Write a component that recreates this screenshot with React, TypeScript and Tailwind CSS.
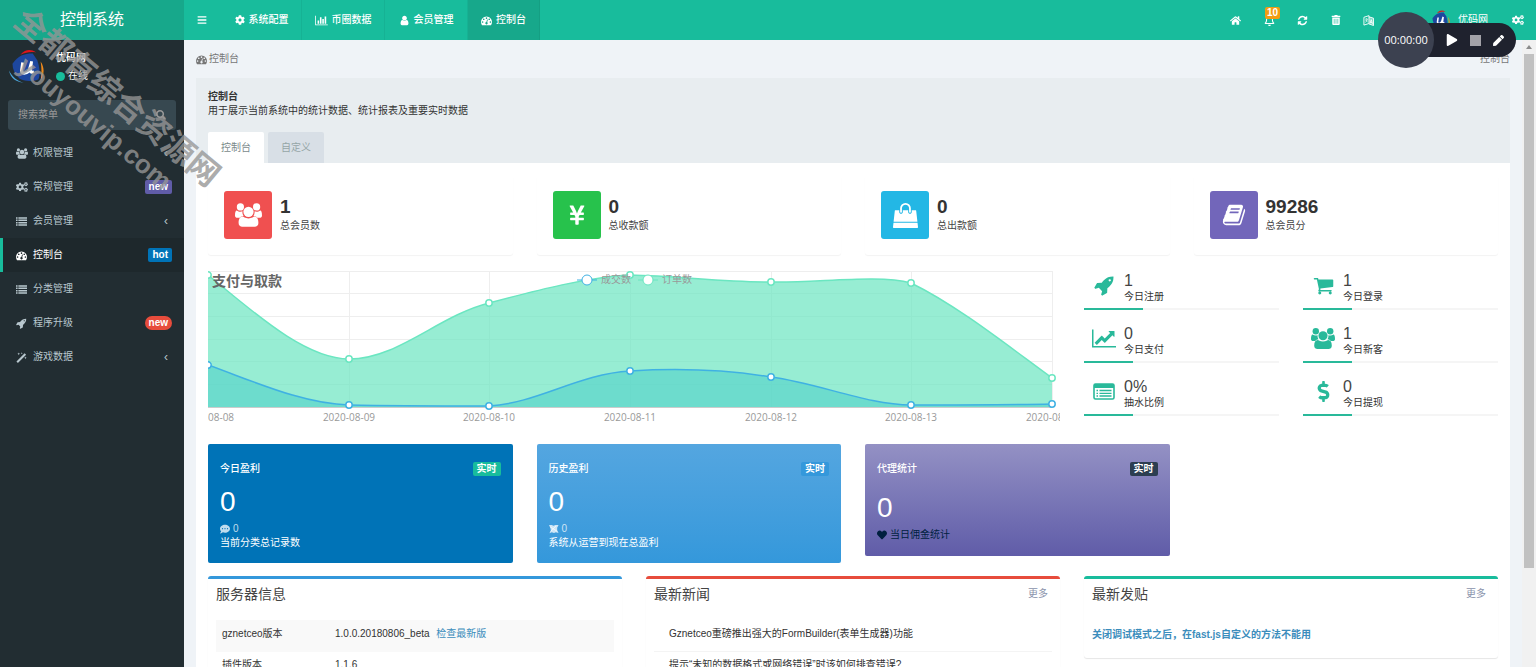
import type { ReactNode } from "react";
import {
  FaBars,
  FaCog,
  FaCogs,
  FaCommentDots,
  FaDollarSign,
  FaExpand,
  FaHeart,
  FaHome,
  FaPen,
  FaPlay,
  FaRegBell,
  FaSearch,
  FaTrashAlt,
  FaYenSign,
} from "react-icons/fa";

const paths = {
  bag: "M1757 1408l35 313q3 28-16 50-19 21-48 21h-1664q-29 0-48-21-19-22-16-50l35-313h1722zm-93-839l86 775h-1708l86-775q3-24 21-40.5t43-16.5h256v128q0 53 37.5 90.5t90.5 37.5 90.5-37.5 37.5-90.5v-128h384v128q0 53 37.5 90.5t90.5 37.5 90.5-37.5 37.5-90.5v-128h256q25 0 43 16.5t21 40.5zm-384-185v256q0 26-19 45t-45 19-45-19-19-45v-256q0-106-75-181t-181-75-181 75-75 181v256q0 26-19 45t-45 19-45-19-19-45v-256q0-159 112.5-271.5t271.5-112.5 271.5 112.5 112.5 271.5z",
  book: "M1703 478q40 57 18 129l-275 906q-19 64-76.5 107.5t-122.5 43.5h-923q-77 0-148.5-53.5t-99.5-131.5q-24-67-2-127 0-4 3-27t4-37q1-8-3-21.5t-3-19.5q2-11 8-21t16.5-23.5 16.5-23.5q23-38 45-91.5t30-91.5q3-10 .5-30t-.5-28q3-11 17-28t17-23q21-36 42-92t25-90q1-9-2.5-32t.5-28q4-13 22-30.5t22-22.5q19-26 42.5-84.5t27.5-96.5q1-8-3-25.5t-2-26.5q2-8 9-18t18-23 17-21q8-12 16.5-30.5t15-35 16-36 19.5-32 26.5-23.5 36-11.5 47.5 5.5l-1 3q38-9 51-9h761q74 0 114 56t18 130l-274 906q-36 119-71.5 153.5t-128.5 34.5h-869q-27 0-38 15-11 16-1 43 24 70 144 70h923q29 0 56-15.5t35-41.5l300-987q7-22 5-57 38 15 59 43zm-1064 2q-4 13 2 22.5t20 9.5h608q13 0 25.5-9.5t16.5-22.5l21-64q4-13-2-22.5t-20-9.5h-608q-13 0-25.5 9.5t-16.5 22.5zm-83 256q-4 13 2 22.5t20 9.5h608q13 0 25.5-9.5t16.5-22.5l21-64q4-13-2-22.5t-20-9.5h-608q-13 0-25.5 9.5t-16.5 22.5z",
  dashboard:
    "M384 1152q0-53-37.5-90.5t-90.5-37.5-90.5 37.5-37.5 90.5 37.5 90.5 90.5 37.5 90.5-37.5 37.5-90.5zm192-448q0-53-37.5-90.5t-90.5-37.5-90.5 37.5-37.5 90.5 37.5 90.5 90.5 37.5 90.5-37.5 37.5-90.5zm428 481l101-382q6-26-7.5-48.5t-38.5-29.5-48 6.5-30 39.5l-101 382q-60 5-107 43.5t-63 98.5q-20 77 20 146t117 89 146-20 89-117q16-60-6-117t-72-91zm660-33q0-53-37.5-90.5t-90.5-37.5-90.5 37.5-37.5 90.5 37.5 90.5 90.5 37.5 90.5-37.5 37.5-90.5zm-640-640q0-53-37.5-90.5t-90.5-37.5-90.5 37.5-37.5 90.5 37.5 90.5 90.5 37.5 90.5-37.5 37.5-90.5zm448 192q0-53-37.5-90.5t-90.5-37.5-90.5 37.5-37.5 90.5 37.5 90.5 90.5 37.5 90.5-37.5 37.5-90.5zm320 448q0 261-141 483-19 29-54 29h-1402q-35 0-54-29-141-221-141-483 0-182 71-348t191-286 286-191 348-71 348 71 286 191 191 286 71 348z",
  rocket:
    "M1440 448q0-40-28-68t-68-28-68 28-28 68 28 68 68 28 68-28 28-68zm224-288q0 249-75.5 430.5t-253.5 360.5q-81 80-195 176l-20 379q-2 16-16 26l-384 224q-7 4-16 4-12 0-23-9l-64-64q-13-14-8-32l85-276-281-281-276 85q-3 1-9 1-14 0-23-9l-64-64q-17-19-5-39l224-384q10-14 26-16l379-20q96-114 176-195 188-187 358-258t431-71q14 0 24 9.5t10 22.5z",
  cart: "M704 1536q0 52-38 90t-90 38-90-38-38-90 38-90 90-38 90 38 38 90zm896 0q0 52-38 90t-90 38-90-38-38-90 38-90 90-38 90 38 38 90zm128-1088v512q0 24-16.5 42.5t-40.5 21.5l-1044 122q13 60 13 70 0 16-24 64h920q26 0 45 19t19 45-19 45-45 19h-1024q-26 0-45-19t-19-45q0-11 8-31.5t16-36 21.5-40 15.5-29.5l-177-823h-204q-26 0-45-19t-19-45 19-45 45-19h256q16 0 28.5 6.5t19.5 15.5 13 24.5 8 26 5.5 29.5 4.5 26h1201q26 0 45 19t19 45z",
  lineChart:
    "M2048 1536v128h-2048v-1536h128v1408h1920zm-128-1248v435q0 21-19.5 29.5t-35.5-7.5l-121-121-633 633q-10 10-23 10t-23-10l-233-233-416 416-192-192 585-585q10-10 23-10t23 10l233 233 464-464-121-121q-16-16-7.5-35.5t29.5-19.5h435q14 0 23 9t9 23z",
  barChart:
    "M640 896v512h-256v-512h256zm384-512v1024h-256v-1024h256zm1024 1152v128h-2048v-1536h128v1408h1920zm-640-896v768h-256v-768h256zm384-384v1152h-256v-1152h256z",
  user: "M1536 1399q0 109-62.5 187t-150.5 78h-854q-88 0-150.5-78t-62.5-187q0-85 8.5-160.5t31.5-152 58.5-131 94-89 134.5-34.5q131 128 313 128t313-128q76 0 134.5 34.5t94 89 58.5 131 31.5 152 8.5 160.5zm-256-887q0 159-112.5 271.5t-271.5 112.5-271.5-112.5-112.5-271.5 112.5-271.5 271.5-112.5 271.5 112.5 112.5 271.5z",
  list: "M0 192h256v256H0zM384 192h1408v256H384zM0 576h256v256H0zM384 576h1408v256H384zM0 960h256v256H0zM384 960h1408v256H384zM0 1344h256v256H0zM384 1344h1408v256H384z",
  refresh:
    "M1639 1056q0 5-1 7-64 268-268 434.5t-478 166.5q-146 0-282.5-55t-243.5-157l-129 129q-19 19-45 19t-45-19-19-45v-448q0-26 19-45t45-19h448q26 0 45 19t19 45-19 45l-137 137q71 66 161 102t187 36q134 0 250-65t186-179q11-17 53-117 8-23 30-23h192q13 0 22.5 9.5t9.5 22.5zm25-800v448q0 26-19 45t-45 19h-448q-26 0-45-19t-19-45 19-45l138-138q-148-137-349-137-134 0-250 65t-186 179q-11 17-53 117-8 23-30 23h-199q-13 0-22.5-9.5t-9.5-22.5v-7q65-268 270-434.5t480-166.5q146 0 284 55.5t245 156.5l130-129q19-19 45-19t45 19 19 45z",
};

function Glyph({
  name,
  className,
  box = "0 0 1792 1792",
}: {
  name: keyof typeof paths;
  className: string;
  box?: string;
}) {
  return (
    <svg viewBox={box} className={`shrink-0 ${className}`} fill="currentColor" aria-hidden="true">
      <path d={paths[name]} />
    </svg>
  );
}

function Group({ className }: { className: string }) {
  const side = "M0 13.500C0 10 .8 8 2 8C4 9.600 6.500 9.600 8.300 8.900C8 11 8.500 12.500 9.500 14C7.500 14.100 6.300 14.800 5.400 16H3C1 16 0 15.300 0 13.500z";
  return (
    <svg viewBox="0 0 30 26" className={`shrink-0 ${className}`} fill="currentColor" aria-hidden="true">
      <circle cx="6" cy="4" r="4" />
      <circle cx="24" cy="4" r="4" />
      <circle cx="15" cy="9.500" r="5.700" />
      <path d={side} />
      <path d={side} transform="matrix(-1 0 0 1 30 0)" />
      <path d="M4 22C4 17.500 5.500 14.800 8.500 14.800C9.500 14.800 11 16.800 15 16.800S20.500 14.800 21.500 14.800C24.500 14.800 26 17.500 26 22C26 25 24 26 22 26H8C6 26 4 25 4 22z" />
    </svg>
  );
}

function Magic({ className }: { className: string }) {
  return (
    <svg viewBox="0 0 12 12" className={`shrink-0 ${className}`} fill="currentColor" aria-hidden="true">
      <path d="M.5 10.300L9.400 1.400 11 3 2.100 11.900zM3 .5l.4 1.100L4.500 2l-1.100.4L3 3.500l-.4-1.100L1.500 2l1.100-.4zM6.300.300l.3.800.8.3-.8.300-.300.800-.3-.8-.8-.3.800-.300zM10.300 5l.4 1 1 .4-1 .4-.4 1-.4-1-1-.4 1-.4z" />
    </svg>
  );
}

function ListAlt({ className }: { className: string }) {
  return (
    <svg viewBox="0 0 22 17" className={`shrink-0 ${className}`} aria-hidden="true">
      <rect x="1" y="1" width="20" height="15" rx="1.5" fill="none" stroke="currentColor" strokeWidth="1.600" />
      <path d="M1 1h20v4H1z" fill="currentColor" />
      <path
        d="M3.500 7.500H5M3.500 10.300H5M3.500 13H5M6.500 7.500h12M6.500 10.300h12M6.500 13h12"
        stroke="currentColor"
        strokeWidth="1.300"
      />
    </svg>
  );
}

function Language({ className }: { className: string }) {
  return (
    <svg viewBox="0 0 12 12" className={`shrink-0 ${className}`} fill="none" stroke="currentColor" aria-hidden="true">
      <path d="M1 2.500l5.500-1.800v8.600L1 11z" />
      <path d="M6.500 2l5 1.500v8l-5-1.800" fill="currentColor" fillOpacity="0.45" />
      <path d="M2.400 4.500h2.800M3.800 3.600v1M2.500 8c1.200-.6 2-1.800 2.200-3.300M3 5.500c.4 1 1.200 1.800 2 2" strokeWidth="0.8" />
      <path d="M7.800 9l1.200-4 1.300 4.700M8.100 7.800l1.800.5" strokeWidth="0.900" />
    </svg>
  );
}

function Flag({ className }: { className: string }) {
  return (
    <svg viewBox="0 0 11 11" className={`shrink-0 ${className}`} fill="currentColor" aria-hidden="true">
      <path d="M0 1h3l2 1 2-1h3.500L9 4v3l1.500 3-3-1-2 .8L3 9 .5 10.200 2 7 1.500 4z" />
      <path d="M1 3l8 5M2 8l6-6" stroke="currentColor" />
    </svg>
  );
}

function Logo({ className }: { className: string }) {
  return (
    <svg viewBox="0 0 32 32" className={`shrink-0 ${className}`} aria-hidden="true">
      <path d="M4 13C9 6 14 4 22 4l4 6c2 6 3 12 1 17-6 2-13 2-17-1-4-4-6-8-6-13z" fill="#1d479f" />
      <path d="M11 5C16 0 20 0 25 3c-5-1-9 0-14 2z" fill="#e0141b" />
      <path d="M29 11c4 6 3 12 0 17 1-6 1-11 0-17z" fill="#f08a1c" />
      <path d="M1 19c1 7 6 10 13 11C8 28 4 25 1 19z" fill="#4ba6dc" />
      <path d="M13 12l-1 7c0 4 6 3 7-1l2-7-1 8c0 2 1 2 3 1" fill="none" stroke="#fff" strokeWidth="2.500" />
    </svg>
  );
}

const menu = [
  { text: "权限管理", icon: <Group className="w-3 h-[11px]" />, arrow: true },
  { text: "常规管理", icon: <FaCogs className="size-3" />, badge: "new", badgeStyle: "rounded-xs bg-[#605ca8]" },
  { text: "会员管理", icon: <Glyph name="list" className="size-[11px]" />, arrow: true },
  {
    text: "控制台",
    icon: <Glyph name="dashboard" className="size-[11px]" />,
    badge: "hot",
    badgeStyle: "rounded-xs bg-[#0073b7]",
    active: true,
  },
  { text: "分类管理", icon: <Glyph name="list" className="size-[11px]" /> },
  { text: "程序升级", icon: <Glyph name="rocket" className="size-[11px]" />, badge: "new", badgeStyle: "rounded-full bg-[#e74c3c]" },
  { text: "游戏数据", icon: <Magic className="size-[11px]" />, arrow: true },
];

const navTabs = [
  { text: "系统配置", icon: <FaCog className="size-[10px]" />, style: "w-20" },
  { text: "币圈数据", icon: <Glyph name="barChart" box="0 0 2048 1792" className="w-[13px] h-[11px]" />, style: "w-[83px]" },
  { text: "会员管理", icon: <Glyph name="user" className="size-[11px]" />, style: "w-[83px]" },
  { text: "控制台", icon: <Glyph name="dashboard" className="size-[11px]" />, style: "w-[72px] bg-[#17a88b]" },
];

const totals = [
  { value: "1", label: "总会员数", bg: "bg-[#f05050]", icon: <Group className="w-[27px] h-6" /> },
  { value: "0", label: "总收款额", bg: "bg-[#27c24c]", icon: <FaYenSign className="size-[22px]" /> },
  { value: "0", label: "总出款额", bg: "bg-[#23b7e5]", icon: <Glyph name="bag" className="size-[25px]" /> },
  { value: "99286", label: "总会员分", bg: "bg-[#7266ba]", icon: <Glyph name="book" className="size-6" /> },
];

const today = [
  { value: "1", label: "今日注册", bar: "w-[30%]", icon: <Glyph name="rocket" className="size-[21px]" /> },
  { value: "1", label: "今日登录", bar: "w-1/4", icon: <Glyph name="cart" className="size-[21px]" /> },
  { value: "0", label: "今日支付", bar: "w-1/4", icon: <Glyph name="lineChart" box="0 0 2048 1792" className="w-6 h-[21px]" /> },
  { value: "1", label: "今日新客", bar: "w-1/4", icon: <Group className="w-6 h-[21px]" /> },
  { value: "0%", label: "抽水比例", bar: "w-1/4", icon: <ListAlt className="w-[22px] h-[17px]" /> },
  { value: "0", label: "今日提现", bar: "w-1/4", icon: <FaDollarSign className="size-[21px]" /> },
];

const greenLine =
  "M0 4C40 36 95 88 141 88C190 88 230 45 281 32C330 19 380 6 422 4C470 5 515 11 563 11C610 12 670 3 703 12C750 35 800 75 844 107";
const blueLine =
  "M0 94C45 110 95 133 141 134C185 135 240 135 281 135C330 132 370 103 422 100C470 97 520 99 563 106C610 112 660 134 703 134C750 134 800 134 844 133";
const xs = [0, 141, 281, 422, 563, 703, 844];
const greenYs = [4, 88, 32, 4, 11, 12, 107];
const blueYs = [94, 134, 135, 100, 106, 134, 133];

function Chart() {
  return (
    <svg viewBox="0 0 852 157" className="w-full" role="img" aria-label="支付与取款">
      <g stroke="#eee">
        {[0.5, 22.5, 45.5, 68.5, 90.5, 113.5].map((y) => (
          <path key={y} d={`M0 ${y}H844`} />
        ))}
        {xs.slice(1).map((x) => (
          <path key={x} d={`M${x}.5 0V136`} />
        ))}
      </g>
      <path d="M0 136.500H844" stroke="#ccc" />
      <path d={`${greenLine}V136H0z`} fill="#6be6c1" fillOpacity="0.7" />
      <path d={greenLine} fill="none" stroke="#6be6c1" strokeWidth="1.5" />
      <path d={`${blueLine}V136H0z`} fill="#44ccc7" fillOpacity="0.5" />
      <path d={blueLine} fill="none" stroke="#3fb1e3" strokeWidth="1.500" />
      {xs.map((x, i) => (
        <g key={x} fill="#fff" strokeWidth="1.500">
          <circle cx={x} cy={greenYs[i]} r="3.200" stroke="#6be6c1" />
          <circle cx={x} cy={blueYs[i]} r="3.200" stroke="#3fb1e3" />
        </g>
      ))}
      <text x="4" y="15" fontSize="14" fontWeight="700" fill="#666">
        支付与取款
      </text>
      <g fontSize="10" fill="#999">
        <path d="M369 9h20" stroke="#3fb1e3" />
        <circle cx="379" cy="9" r="5" fill="#fff" stroke="#3fb1e3" />
        <text x="393" y="12">成交数</text>
        <path d="M430 9h20" stroke="#6be6c1" />
        <circle cx="440" cy="9" r="5" fill="#fff" stroke="#6be6c1" />
        <text x="454" y="12">订单数</text>
      </g>
      <g fontSize="10" fill="#999" textAnchor="middle" className="font-['Open_Sans','Noto_Sans',sans-serif]">
        {xs.map((x, i) => (
          <text key={x} x={x} y="150">
            {`2020-08-${String(i + 8).padStart(2, "0")}`}
          </text>
        ))}
      </g>
    </svg>
  );
}

function ProfitCard({
  title,
  bg,
  tag,
  children,
}: {
  title: string;
  bg: string;
  tag: string;
  children: ReactNode;
}) {
  return (
    <div className={`rounded-xs px-3 text-white ${bg}`}>
      <div className="flex items-center justify-between pt-[18px]">
        <h5 className="font-medium">{title}</h5>
        <span className={`rounded-xs px-1 font-bold leading-[14px] ${tag}`}>实时</span>
      </div>
      {children}
    </div>
  );
}

function Box({ title, border, more, children }: { title: string; border: string; more?: boolean; children: ReactNode }) {
  return (
    <section className={`rounded-[3px] border-t-[3px] bg-white px-2 shadow-[0_1px_1px_rgba(0,0,0,0.1)] ${border}`}>
      <div className="flex h-[41px] items-start justify-between pt-[3px]">
        <h3 className="text-[14px] leading-6 text-[#444]">{title}</h3>
        {more && (
          <a href="#more" className="pr-1 leading-6 text-[#8a93ab]">
            更多
          </a>
        )}
      </div>
      {children}
    </section>
  );
}

export default function App() {
  return (
    <div className="relative flex h-screen overflow-hidden bg-[#eff3f7] font-['Liberation_Sans','Noto_Sans_CJK_SC',sans-serif] text-[10px] leading-[14px] text-[#333]">
      <aside className="w-[184px] shrink-0 bg-[#222d32] text-[#b8c7ce]">
        <a href="#home" className="flex h-10 items-center justify-center bg-[#17a88b] text-[16px] text-white">
          控制系统
        </a>
        <div className="flex items-center gap-3 pt-[9px] pl-2">
          <Logo className="size-9" />
          <div className="text-white">
            <p className="font-bold leading-[18px]">优码网</p>
            <p className="flex items-center gap-[3px] leading-[18px]">
              <span className="size-[9px] rounded-full bg-[#18bc9c]" />
              在线
            </p>
          </div>
        </div>
        <form className="mx-2 mt-[15px] flex h-[30px] items-center rounded-[3px] bg-[#374850] px-2.5">
          <input aria-label="搜索菜单" placeholder="搜索菜单" className="min-w-0 flex-1 bg-transparent outline-none placeholder:text-[#999]" />
          <button type="button" aria-label="搜索">
            <FaSearch className="size-[10px] text-[#999]" />
          </button>
        </form>
        <nav className="mt-1.5">
          {menu.map((item) => (
            <a
              key={item.text}
              href="#menu"
              className={`flex h-[34px] items-center border-l-[3px] pr-3 pl-[13px] ${
                item.active ? "border-[#18bc9c] bg-[#1e282c] text-white" : "border-transparent"
              }`}
            >
              <span className="flex w-[17px] items-center">{item.icon}</span>
              <span className="flex-1">{item.text}</span>
              {item.badge && (
                <span className={`px-1 font-bold leading-[14px] text-white ${item.badgeStyle}`}>{item.badge}</span>
              )}
              {item.arrow && <span className="pr-1 text-[12px]">‹</span>}
            </a>
          ))}
        </nav>
      </aside>

      <div className="flex min-w-0 flex-1 flex-col">
        <header className="flex h-10 shrink-0 items-center bg-[#18bc9c] text-white">
          <button type="button" aria-label="菜单" className="flex w-9 justify-center">
            <FaBars className="size-[10px]" />
          </button>
          {navTabs.map((tab) => (
            <a
              key={tab.text}
              href="#tab"
              className={`ml-0 flex h-full items-center justify-center gap-1 border-r border-black/5 font-medium first-of-type:ml-0.5 ${tab.style}`}
            >
              {tab.icon}
              {tab.text}
            </a>
          ))}
          <div className="ml-auto flex items-center">
            <a href="#home" aria-label="首页" className="flex w-[34px] justify-center">
              <FaHome className="size-[11px]" />
            </a>
            <a href="#notice" aria-label="通知" className="relative flex w-[34px] justify-center">
              <FaRegBell className="size-[11px]" />
              <span className="absolute -top-2 left-[13px] rounded-xs bg-[#f39c12] px-0.5 font-bold leading-3">10</span>
            </a>
            <button type="button" aria-label="刷新" className="flex w-[33px] justify-center">
              <Glyph name="refresh" className="size-[11px]" />
            </button>
            <button type="button" aria-label="清空缓存" className="flex w-[33px] justify-center">
              <FaTrashAlt className="size-[10px]" />
            </button>
            <button type="button" aria-label="语言" className="flex w-[33px] justify-center">
              <Language className="size-[11px]" />
            </button>
            <button type="button" aria-label="全屏" className="flex w-[33px] justify-center">
              <FaExpand className="size-[10px]" />
            </button>
            <a href="#user" className="flex items-center gap-2 px-3">
              <Logo className="size-5" />
              优码网
            </a>
            <button type="button" aria-label="设置" className="flex w-9 justify-center">
              <FaCogs className="size-3" />
            </button>
          </div>
        </header>

        <div className="flex min-h-0 flex-1">
          <main className="min-w-0 flex-1 overflow-hidden px-3">
            <div className="flex h-[38px] items-center justify-between text-[#777]">
              <span className="flex items-center gap-0.5">
                <Glyph name="dashboard" className="size-[11px]" />
                控制台
              </span>
              <span>控制台</span>
            </div>

            <div className="bg-white">
              <div className="bg-[#e8edf0] px-3 pt-3">
                <h1 className="font-bold">控制台</h1>
                <p>用于展示当前系统中的统计数据、统计报表及重要实时数据</p>
                <div className="mt-[14px] flex gap-1">
                  <button type="button" className="h-[31px] w-14 rounded-t-xs bg-white text-[#7b8a8b]">
                    控制台
                  </button>
                  <button type="button" className="h-[31px] w-14 rounded-t-xs bg-[#d8dfe6] text-[#95a5a6]">
                    自定义
                  </button>
                </div>
              </div>

              <div className="px-3 pt-3">
                <div className="grid grid-cols-4 gap-6">
                  {totals.map((item) => (
                    <div key={item.label} className="flex gap-2 rounded-[3px] p-4 shadow-[0_1px_1px_rgba(0,0,0,0.05)]">
                      <span className={`flex size-12 items-center justify-center rounded-[3px] text-white ${item.bg}`}>
                        {item.icon}
                      </span>
                      <div className="pt-[5px]">
                        <p className="text-[19px] font-bold leading-[22px]">{item.value}</p>
                        <p className="leading-4 text-[#444]">{item.label}</p>
                      </div>
                    </div>
                  ))}
                </div>

                <div className="mt-4 grid grid-cols-3 gap-6">
                  <div className="col-span-2">
                    <Chart />
                  </div>
                  <div className="grid grid-cols-2 content-start gap-x-6 gap-y-[14px]">
                    {today.map((item) => (
                      <div key={item.label}>
                        <div className="flex h-[37px] items-start pl-2">
                          <span className="flex h-7 w-6 items-center justify-center text-[#29b99a]">{item.icon}</span>
                          <div className="pl-2">
                            <p className="text-[16px] leading-[19px] text-[#444]">{item.value}</p>
                            <p>{item.label}</p>
                          </div>
                        </div>
                        <div className="h-0.5 bg-[#f5f5f5]">
                          <div className={`h-full bg-[#29b99a] ${item.bar}`} />
                        </div>
                      </div>
                    ))}
                  </div>
                </div>

                <div className="mt-4 grid grid-cols-4 items-start gap-6">
                  <ProfitCard title="今日盈利" bg="h-[119px] bg-[#0073b7]" tag="bg-[#18bc9c]">
                    <p className="mt-2 text-[28px] leading-9">0</p>
                    <p className="mt-0.5 flex items-center gap-[3px] text-white/75">
                      <FaCommentDots className="size-[10px]" />0
                    </p>
                    <p>当前分类总记录数</p>
                  </ProfitCard>
                  <ProfitCard title="历史盈利" bg="h-[119px] bg-linear-to-b from-[#54a6e0] to-[#3498db]" tag="bg-[#3498db]">
                    <p className="mt-2 text-[28px] leading-9">0</p>
                    <p className="mt-0.5 flex items-center gap-[3px] text-white/75">
                      <Flag className="size-[10px]" />0
                    </p>
                    <p>系统从运营到现在总盈利</p>
                  </ProfitCard>
                  <ProfitCard title="代理统计" bg="h-28 bg-linear-to-b from-[#9491c4] to-[#605ca8]" tag="bg-[#2c3e50]">
                    <p className="mt-[14px] text-[28px] leading-9">0</p>
                    <p className="mt-0.5 flex items-center gap-[3px] text-[#001f3f]">
                      <FaHeart className="size-[10px]" />
                      当日佣金统计
                    </p>
                  </ProfitCard>
                </div>

                <div className="mt-[13px] grid grid-cols-3 items-start gap-6">
                  <Box title="服务器信息" border="border-[#3498db]">
                    <table className="w-full">
                      <tbody>
                        <tr className="h-8 bg-[#f9f9f9]">
                          <td className="w-[113px] px-1.5 pb-1">gznetceo版本</td>
                          <td className="px-1.5 pb-1">
                            1.0.0.20180806_beta{" "}
                            <a href="#update" className="ml-1 text-[#3c8dbc]">
                              检查最新版
                            </a>
                          </td>
                        </tr>
                        <tr className="h-8">
                          <td className="px-1.5 pb-1.5">插件版本</td>
                          <td className="px-1.5 pb-1.5">1.1.6</td>
                        </tr>
                      </tbody>
                    </table>
                  </Box>
                  <Box title="最新新闻" border="border-[#e74c3c]" more>
                    <ul>
                      <li className="flex h-8 items-center border-b border-[#f4f4f4] pb-1 pl-[15px]">
                        Gznetceo重磅推出强大的FormBuilder(表单生成器)功能
                      </li>
                      <li className="flex h-8 items-start pt-1.5 pl-[15px]">提示“未知的数据格式或网络错误”时该如何排查错误?</li>
                    </ul>
                  </Box>
                  <Box title="最新发贴" border="border-[#18bc9c]" more>
                    <a href="#post" className="block pt-2 pb-4 font-bold text-[#3c8dbc]">
                      关闭调试模式之后，在fast.js自定义的方法不能用
                    </a>
                  </Box>
                </div>
              </div>
            </div>
          </main>

          <div className="flex w-3.5 shrink-0 flex-col items-center bg-[#f1f1f1]">
            <span className="my-[5px] size-0 border-x-[3px] border-b-4 border-x-transparent border-b-[#8b8b8b]" />
            <span className="h-[82%] w-2.5 bg-[#c1c1c1]" />
          </div>
        </div>
      </div>

      {/* floating recorder */}
      <div className="absolute top-3 right-5 flex items-center text-white">
        <span className="z-10 flex size-14 items-center justify-center rounded-full bg-[#3c4150] font-['Open_Sans','Noto_Sans',sans-serif] text-[11px]">
          00:00:00
        </span>
        <div className="-ml-7 flex h-[34px] items-center gap-3 rounded-r-full bg-[#1f222e] pr-3 pl-10">
          <button type="button" aria-label="播放">
            <FaPlay className="size-3" />
          </button>
          <button type="button" aria-label="停止" className="size-[11px] bg-[#a3a2a8]" />
          <button type="button" aria-label="编辑">
            <FaPen className="size-[11px]" />
          </button>
        </div>
      </div>

      {/* watermark */}
      <div className="pointer-events-none absolute top-0 left-8 origin-top-left rotate-[40deg] font-bold whitespace-nowrap text-[#969696]/80">
        <p className="text-[32px] leading-10">全都有综合资源网</p>
        <p className="pl-8 text-[26px] leading-7">youyouvip.com</p>
      </div>
    </div>
  );
}
